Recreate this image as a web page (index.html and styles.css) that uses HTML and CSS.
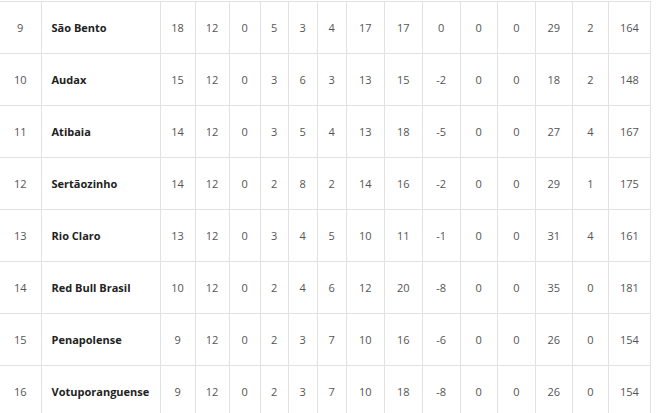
FILE: index.html
```html
<!DOCTYPE html>
<html lang="pt-BR">
<head>
<meta charset="utf-8">
<title>Classificação</title>
<link rel="stylesheet" href="styles.css">
</head>
<body>
<table class="standings">
<colgroup>
<col class="c-pos"><col class="c-name"><col class="c-a"><col class="c-b"><col class="c-c"><col class="c-d"><col class="c-e"><col class="c-f"><col class="c-g"><col class="c-h"><col class="c-i"><col class="c-j"><col class="c-k"><col class="c-l"><col class="c-m"><col class="c-n">
</colgroup>
<tbody>
<tr><td>9</td><td class="team">São Bento</td><td>18</td><td>12</td><td>0</td><td>5</td><td>3</td><td>4</td><td>17</td><td>17</td><td>0</td><td>0</td><td>0</td><td>29</td><td>2</td><td>164</td></tr>
<tr><td>10</td><td class="team">Audax</td><td>15</td><td>12</td><td>0</td><td>3</td><td>6</td><td>3</td><td>13</td><td>15</td><td>-2</td><td>0</td><td>0</td><td>18</td><td>2</td><td>148</td></tr>
<tr><td>11</td><td class="team">Atibaia</td><td>14</td><td>12</td><td>0</td><td>3</td><td>5</td><td>4</td><td>13</td><td>18</td><td>-5</td><td>0</td><td>0</td><td>27</td><td>4</td><td>167</td></tr>
<tr><td>12</td><td class="team">Sertãozinho</td><td>14</td><td>12</td><td>0</td><td>2</td><td>8</td><td>2</td><td>14</td><td>16</td><td>-2</td><td>0</td><td>0</td><td>29</td><td>1</td><td>175</td></tr>
<tr><td>13</td><td class="team">Rio Claro</td><td>13</td><td>12</td><td>0</td><td>3</td><td>4</td><td>5</td><td>10</td><td>11</td><td>-1</td><td>0</td><td>0</td><td>31</td><td>4</td><td>161</td></tr>
<tr><td>14</td><td class="team">Red Bull Brasil</td><td>10</td><td>12</td><td>0</td><td>2</td><td>4</td><td>6</td><td>12</td><td>20</td><td>-8</td><td>0</td><td>0</td><td>35</td><td>0</td><td>181</td></tr>
<tr><td>15</td><td class="team">Penapolense</td><td>9</td><td>12</td><td>0</td><td>2</td><td>3</td><td>7</td><td>10</td><td>16</td><td>-6</td><td>0</td><td>0</td><td>26</td><td>0</td><td>154</td></tr>
<tr><td>16</td><td class="team">Votuporanguense</td><td>9</td><td>12</td><td>0</td><td>2</td><td>3</td><td>7</td><td>10</td><td>18</td><td>-8</td><td>0</td><td>0</td><td>26</td><td>0</td><td>154</td></tr>
</tbody>
</table>
</body>
</html>
```
FILE: styles.css
```css
html, body {
  margin: 0;
  padding: 0;
  background: #ffffff;
}
body {
  padding-top: 1px;
  font-family: "Open Sans", "Noto Sans", sans-serif;
  font-size: 11px;
  color: #555555;
}
.standings {
  border-collapse: collapse;
  table-layout: fixed;
  width: 651px;
}
.standings td {
  height: 51px;
  padding: 0;
  border: 1px solid #e2e2e2;
  text-align: center;
  vertical-align: middle;
  line-height: 15px;
}
.standings td.team {
  text-align: left;
  padding-left: 10px;
  font-weight: 700;
  color: #222222;
}
.standings tr td:first-child {
  border-left: none;
}
.c-pos { width: 41px; }
.c-name { width: 119px; }
.c-a { width: 35px; }
.c-b { width: 34px; }
.c-c { width: 31px; }
.c-d { width: 28px; }
.c-e { width: 29px; }
.c-f { width: 29px; }
.c-g { width: 38px; }
.c-h { width: 38px; }
.c-i { width: 38px; }
.c-j { width: 37px; }
.c-k { width: 38px; }
.c-l { width: 37px; }
.c-m { width: 36px; }
.c-n { width: 42px; }
```
